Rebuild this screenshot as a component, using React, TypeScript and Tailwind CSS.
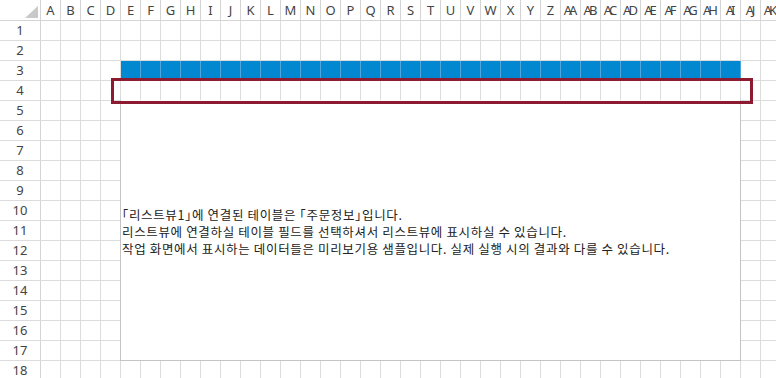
import React from "react";

const COLS = (() => {
  const out: string[] = [];
  for (let i = 0; i < 37; i++) {
    if (i < 26) out.push(String.fromCharCode(65 + i));
    else out.push("A" + String.fromCharCode(65 + i - 26));
  }
  return out;
})();

const ROWS = Array.from({ length: 18 }, (_, i) => i + 1);

function B({ children }: { children: React.ReactNode }) {
  return <span className="[font-feature-settings:'halt']">{children}</span>;
}

export default function App() {
  return (
    <div
      className="relative w-[776px] h-[378px] overflow-hidden bg-white text-[#444]"
      style={{ fontFamily: '"Noto Sans", "Open Sans", sans-serif' }}
    >
      {/* header row */}
      <div className="flex h-[21px] border-b border-[#d4d4d4]">
        <div className="relative w-[41px] shrink-0 border-r border-[#d4d4d4]">
          <div className="absolute right-[2px] bottom-[2px] w-0 h-0 border-l-[13px] border-l-transparent border-b-[12px] border-b-[#c9c9c9]" />
        </div>
        {COLS.map((c) => (
          <div
            key={c}
            className={`w-[20px] shrink-0 border-r border-[#d4d4d4] flex items-center justify-center overflow-hidden text-[13px] leading-none ${
              c.length > 1 ? "tracking-[-3px]" : ""
            }`}
          >
            <span className={c.length > 1 ? "pr-[3px]" : ""}>{c}</span>
          </div>
        ))}
      </div>
      {ROWS.map((r) => (
        <div key={r} className="flex h-[20px] border-b border-[#dcdcdc]">
          <div className="w-[41px] shrink-0 border-r border-[#d4d4d4] flex items-center justify-center text-[13px] leading-none">
            {r}
          </div>
          {COLS.map((c, i) => {
            const blue = r === 3 && i >= 4 && i <= 34;
            return (
              <div
                key={c}
                className={`w-[20px] shrink-0 border-r ${
                  blue ? "bg-[#0288d1] border-[#4fa6dc]" : "border-[#dcdcdc]"
                }`}
              />
            );
          })}
        </div>
      ))}

      {/* list view panel */}
      <div className="absolute left-[120px] top-[100px] w-[621px] h-[261px] bg-white border-l border-r border-b border-[#c4c4c4]">
        <div
          className="pt-[106px] pl-[1px] text-[12.5px] leading-[17px] tracking-[0.65px] text-[#222] whitespace-nowrap"
          style={{ fontFamily: '"Noto Sans CJK KR", "Noto Sans", sans-serif' }}
        >
          <div>
            <B>「</B>리스트뷰1<B>」</B>에 연결된 테이블은 <B>「</B>주문정보<B>」</B>입니다.
          </div>
          <div>리스트뷰에 연결하실 테이블 필드를 선택하셔서 리스트뷰에 표시하실 수 있습니다.</div>
          <div>작업 화면에서 표시하는 데이터들은 미리보기용 샘플입니다. 실제 실행 시의 결과와 다를 수 있습니다.</div>
        </div>
      </div>

      {/* selection box */}
      <div className="absolute left-[111px] top-[78px] w-[642px] h-[26px] border-[3px] border-[#8c1a30]" />
    </div>
  );
}
